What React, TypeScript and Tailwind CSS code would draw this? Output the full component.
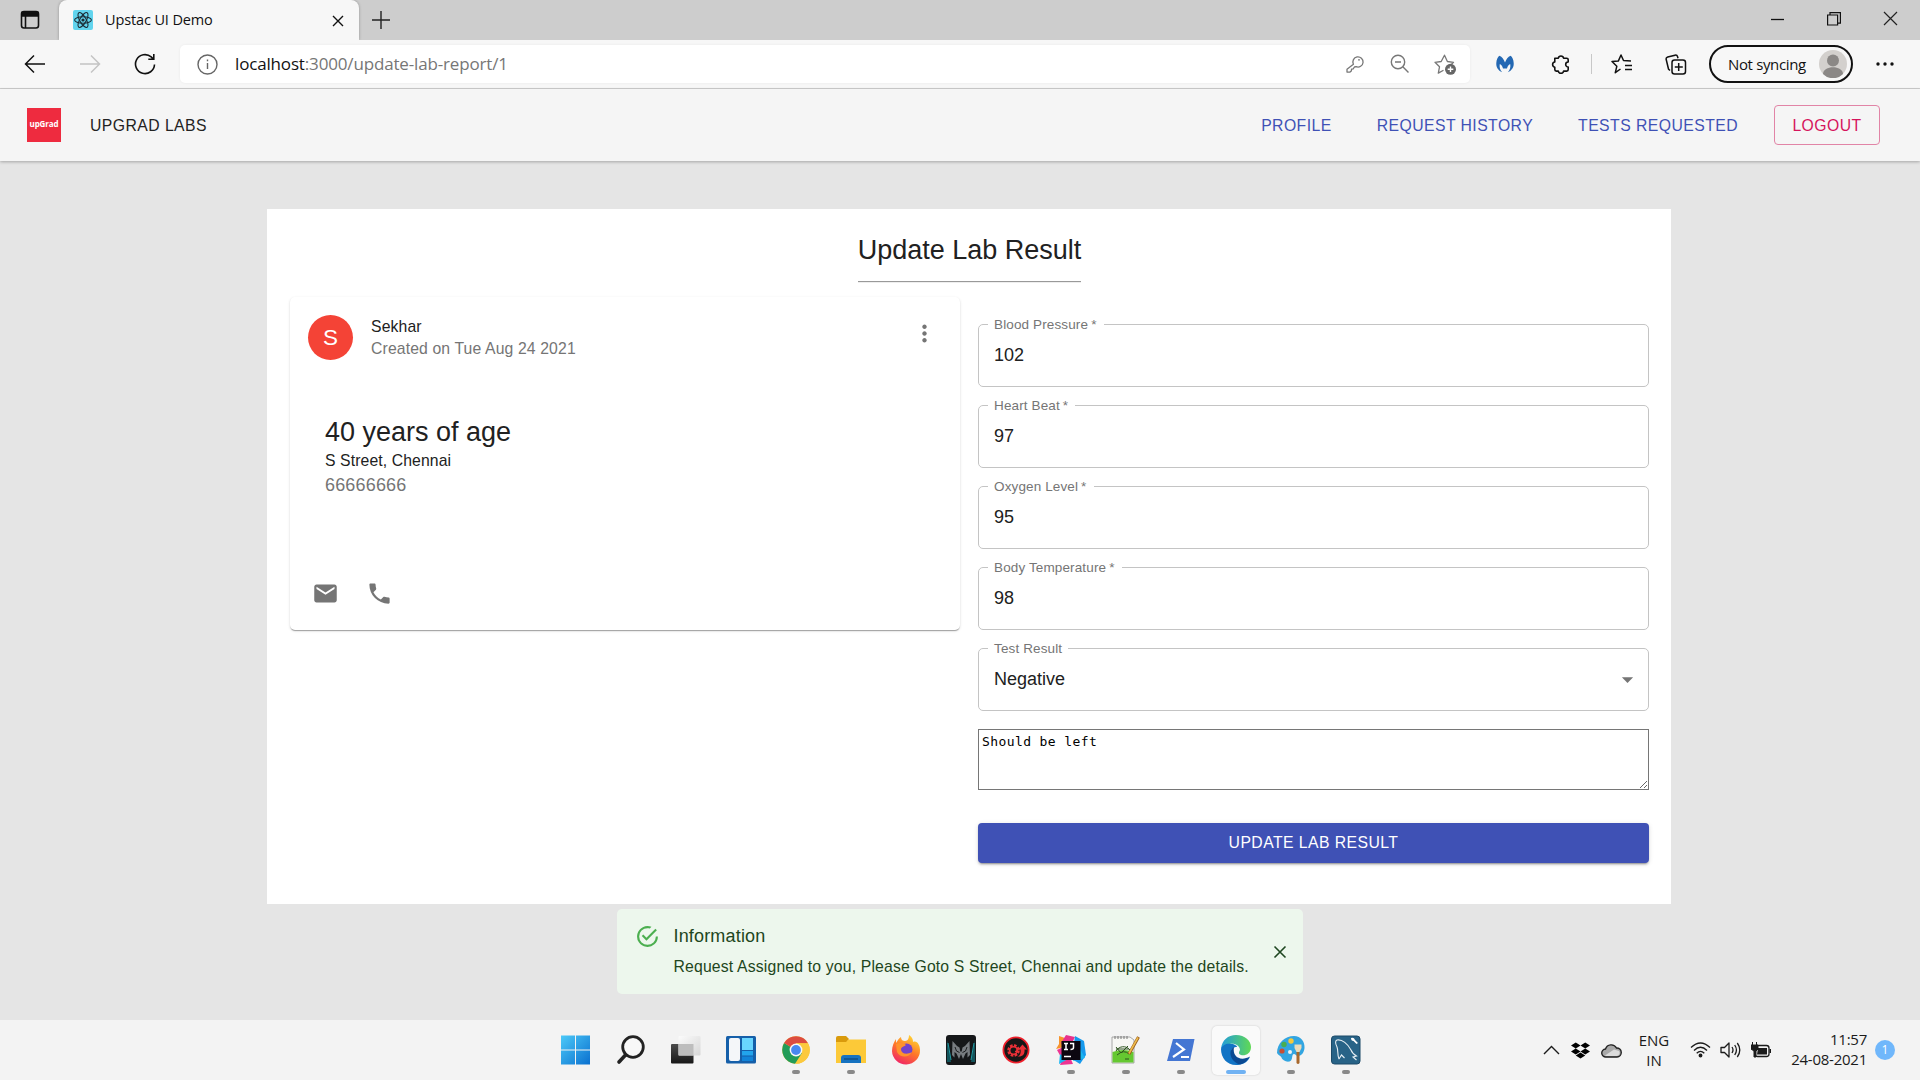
import React from "react";
import { MdEmail, MdPhone, MdMoreVert, MdArrowDropDown } from "react-icons/md";
import { FaDropbox } from "react-icons/fa";

const arial = "font-['Liberation_Sans',Arial,sans-serif]";

function TabBar() {
  return (
    <div className="flex h-10 items-stretch bg-[#cdcdcd] text-[#111]">
      <div className="flex w-[59px] items-center justify-center">
        <svg width="20" height="20" viewBox="0 0 20 20" fill="none" stroke="#111" strokeWidth="1.6">
          <rect x="1.5" y="1.5" width="17" height="16.500" rx="2.5" />
          <path d="M2 2.500h16v3.500H2z" fill="#111" />
          <path d="M5.500 6v12" />
        </svg>
      </div>
      <div className="flex w-[300px] items-center rounded-t-lg bg-[#f7f7f7] pl-[14px] pr-[14px] shadow-[0_0_3px_rgba(0,0,0,0.3)]">
        <svg width="20" height="20" viewBox="0 0 20 20" fill="none" stroke="#1b2b35" strokeWidth="1.1">
          <rect width="20" height="20" rx="2" fill="#61d4ee" stroke="none" />
          <ellipse cx="10" cy="10" rx="8.400" ry="3.200" />
          <ellipse cx="10" cy="10" rx="8.400" ry="3.200" transform="rotate(60 10 10)" />
          <ellipse cx="10" cy="10" rx="8.400" ry="3.200" transform="rotate(120 10 10)" />
          <circle cx="10" cy="10" r="1.600" fill="#1b2b35" stroke="none" />
        </svg>
        <span className="ml-3 flex-1 font-['Open_Sans',sans-serif] text-[14.5px] tracking-[-0.13px]">Upstac UI Demo</span>
        <svg width="14" height="14" viewBox="0 0 14 14" className="mt-px" stroke="#111" strokeWidth="1.4">
          <path d="M2 2l10 10M12 2L2 12" />
        </svg>
      </div>
      <div className="flex flex-1 items-center pl-[13px]">
        <svg width="18" height="18" viewBox="0 0 18 18" stroke="#222" strokeWidth="1.4">
          <path d="M9 0v18M0 9h18" />
        </svg>
      </div>
      <div className="flex items-center gap-[42px] pb-[3px] pr-[22px]">
        <svg width="14" height="14" viewBox="0 0 14 14" stroke="#111" strokeWidth="1.3">
          <path d="M0 7.500h13" />
        </svg>
        <svg width="14" height="14" viewBox="0 0 14 14" fill="none" stroke="#111" strokeWidth="1.2">
          <path d="M.6 3h10v10H.6zM3 3V.7h10.400v10.400h-2.600" />
        </svg>
        <svg width="15" height="15" viewBox="0 0 15 15" stroke="#222" strokeWidth="1.2">
          <path d="M1 1l13 13M14 1L1 14" />
        </svg>
      </div>
    </div>
  );
}

function Toolbar() {
  return (
    <div className="flex h-[49px] items-center border-b border-[#cfcfcf] bg-[#f7f7f7]">
      <svg className="ml-6" width="22" height="20" viewBox="0 0 22 20" fill="none" stroke="#111" strokeWidth="1.5">
        <path d="M21 10H1.500M10 1.500L1.500 10l8.500 8.500" />
      </svg>
      <svg className="ml-[33px]" width="22" height="20" viewBox="0 0 22 20" fill="none" stroke="#c4c4c4" strokeWidth="1.5">
        <path d="M1 10h19.500M12 1.500l8.500 8.500-8.500 8.500" />
      </svg>
      <svg className="ml-[33px]" width="22" height="22" viewBox="0 0 22 22" fill="none" stroke="#111" strokeWidth="1.600">
        <path d="M20.500 11.500a9.500 9.500 0 1 1-3.300-7.600l2 2M19.800 1v5.300h-5.500" />
      </svg>
      <div className="ml-[24px] flex h-[38px] w-[1290px] items-center rounded-[5px] bg-white pl-[17px] shadow-[0_0_3px_rgba(0,0,0,0.06)]">
        <svg width="21" height="21" viewBox="0 0 21 21" fill="none" stroke="#666" strokeWidth="1.400">
          <circle cx="10.500" cy="10.500" r="9.500" />
          <path d="M10.500 9v6M10.500 5.500v1.800" />
        </svg>
        <div className="ml-[17px] flex-1 font-['Open_Sans',sans-serif] text-[17px] tracking-[-0.16px] text-[#767676]">
          <span className="text-[#111]">localhost</span>:3000/update-lab-report/1
        </div>
        <svg width="18" height="18" viewBox="0 0 18 18" fill="none" stroke="#777" strokeWidth="1.300" strokeLinejoin="round">
          <path d="M7.400 9.200a5.100 5.100 0 1 1 2.700 2.500l-1.700.3-1.200 1.800-1.600.4-.3 1.700-1.300 1.200H1v-2.800z" />
          <circle cx="13" cy="4.800" r=".9" fill="#777" stroke="none" />
        </svg>
        <svg className="ml-[26px]" width="20" height="20" viewBox="0 0 20 20" fill="none" stroke="#777" strokeWidth="1.400">
          <circle cx="8" cy="8" r="6.700" />
          <path d="M12.800 12.800L18.500 18.500M5 8h6" />
        </svg>
        <svg className="ml-[24px] mr-[13px]" width="23" height="22" viewBox="0 0 23 22" fill="none">
          <path d="M9.500 17.200l-5.200 2.900 1.200-6.300L1 9.300l6.200-.8L10.500 2.200l2.900 6.300 6.100.8-2 2" stroke="#777" strokeWidth="1.300" strokeLinejoin="round" />
          <circle cx="16.500" cy="16.300" r="5.500" fill="#666" />
          <path d="M16.500 13.500v5.600M13.700 16.300h5.600" stroke="#fff" strokeWidth="1.400" />
        </svg>
      </div>
      <svg className="ml-[26px]" width="18" height="18" viewBox="0 0 18 18" fill="#2468b3">
        <path d="M6.200 17.300C2 15.500 0 12 .3 8 .5 4.500 1.800 1.800 3.500.8 6 1.800 7.800 4.500 9 7.500 10.200 4.500 12 1.800 14.500.8c1.700 1 3 3.700 3.200 7.200.3 4-1.700 7.500-5.900 9.300 2.200-2 3-5.300 2.400-8.300-1.700.8-2.700 2.500-3.200 4.500H7c-.5-2-1.500-3.700-3.200-4.500-.6 3 .2 6.300 2.400 8.300z" />
      </svg>
      <svg className="ml-[37px]" width="20" height="21" viewBox="0 0 20 21" fill="none" stroke="#111" strokeWidth="1.600" strokeLinejoin="round">
        <path d="M3.800 4.200h3.500a2.700 2.700 0 0 1 5.300 0h3.100a1.500 1.500 0 0 1 1.500 1.500v2.300a2.500 2.500 0 1 0 0 5v2.600a1.500 1.500 0 0 1-1.500 1.500h-3.100a2.700 2.700 0 0 1-5.300 0H5.300a1.500 1.500 0 0 1-1.500-1.500V13.200a2.700 2.700 0 0 1 0-5.300z" />
      </svg>
      <div className="ml-[20px] h-5 w-px bg-[#c8c8c8]" />
      <svg className="ml-[19px]" width="22" height="20" viewBox="0 0 22 20" fill="none" stroke="#111" strokeWidth="1.500" strokeLinejoin="round">
        <path d="M9.500 15L4.300 18.700l1.500-6.400L1 7.500l6.300-.4L10 1l2.500 5.500L20 7M14 11.500h7M14 15.500h7" />
      </svg>
      <svg className="ml-[32px]" width="22" height="21" viewBox="0 0 22 21" fill="none" stroke="#111" strokeWidth="1.500">
        <path d="M5 16.500L3.500 15 1.200 5.500c-.3-1.300.3-2.200 1.500-2.500L10 1.200c1.300-.3 2.200.2 2.600 1.500l.4 1.500" />
        <rect x="7" y="6" width="13.500" height="14" rx="2.500" />
        <path d="M13.700 9v8M9.800 13h8" />
      </svg>
      <div className="ml-[22px] flex h-[38px] w-[144px] items-center justify-between rounded-full border-2 border-[#111] pl-[17px] pr-[4px]">
        <span className="whitespace-nowrap font-['Open_Sans',sans-serif] text-[15px] tracking-[-0.35px] text-[#111]">Not syncing</span>
        <svg width="28" height="28" viewBox="0 0 28 28">
          <circle cx="14" cy="14" r="14" fill="#d3d0cd" />
          <circle cx="14" cy="10.500" r="6" fill="#8b8886" />
          <path d="M4 24c0-9 20-9 20 0a14 14 0 0 1-20 0z" fill="#8b8886" />
        </svg>
      </div>
      <svg className="ml-[23px]" width="18" height="4" viewBox="0 0 18 4" fill="#111">
        <circle cx="2" cy="2" r="1.700" /><circle cx="9" cy="2" r="1.700" /><circle cx="16" cy="2" r="1.700" />
      </svg>
    </div>
  );
}

function AppHeader() {
  return (
    <header className="flex h-[72px] items-center bg-[#f5f5f5] pl-[27px] pr-[40px] text-[15.750px] tracking-[0.450px] shadow-[0_1px_3px_rgba(0,0,0,0.28)]">
      <div className="flex h-[34px] w-[34px] items-center justify-center bg-[#ee2b3f] pb-[2px] font-['Open_Sans',sans-serif] text-[8px] font-bold tracking-[-0.1px] text-white">
        upGrad
      </div>
      <span className="ml-[29px] flex-1 pt-[2px] text-[#222]">UPGRAD LABS</span>
      <nav className="flex items-center text-[#3f51b5]">
        <span className="pt-[2px]">PROFILE</span>
        <span className="ml-[45px] pt-[2px]">REQUEST HISTORY</span>
        <span className="ml-[45px] pt-[2px]">TESTS REQUESTED</span>
        <span className="ml-[36px] flex h-10 w-[106px] items-center justify-center rounded-[4px] border border-[#e184a6] pt-px text-[#d5145c]">LOGOUT</span>
      </nav>
    </header>
  );
}

function PatientCard() {
  return (
    <section className="mt-[1px] flex h-[333px] w-[670px] flex-col rounded-[5px] bg-white shadow-[0_2px_1px_-1px_rgba(0,0,0,0.2),0_1px_1px_rgba(0,0,0,0.14),0_1px_3px_rgba(0,0,0,0.12)]">
      <div className="flex h-[81px] items-center pl-[18px] pr-[22px]">
        <div className="flex h-[45px] w-[45px] items-center justify-center rounded-full bg-[#f44336] text-[22.500px] text-white">S</div>
        <div className="ml-[18px] flex-1 text-[15.750px] leading-[22px] tracking-[0.130px]">
          <div className="text-[#212121]">Sekhar</div>
          <div className="text-[#757575]">Created on Tue Aug 24 2021</div>
        </div>
        <MdMoreVert className="-mt-2 text-[27px] text-[#757575]" />
      </div>
      <div className="mt-[36px] flex-1 pl-[35px]">
        <div className="text-[27px] leading-[36px] text-[#212121]">40 years of age</div>
        <div className="text-[15.750px] leading-[22px] tracking-[0.110px] text-[#212121]">S Street, Chennai</div>
        <div className="text-[18px] leading-[27px] tracking-[0.170px] text-[#757575]">66666666</div>
      </div>
      <div className="flex h-[50px] gap-[27px] pl-[22px] text-[27px] text-[#757575]">
        <MdEmail />
        <MdPhone />
      </div>
    </section>
  );
}

function Field({ label, value, required, select }: { label: string; value: string; required?: boolean; select?: boolean }) {
  return (
    <fieldset className="mb-[12px] h-[69px] rounded-[5px] border border-[#c4c4c4] pl-[9px] pr-[7px]">
      <legend className="h-[12px] px-[6px] text-[13.500px] leading-[13px] tracking-[0.130px] text-[#757575]">
        {label}
        {required && <span className="pl-[3px] pr-px">*</span>}
      </legend>
      <div className="flex h-[50px] items-center justify-between pl-[6px] text-[18px] text-[#212121]">
        <span>{value}</span>
        {select && <MdArrowDropDown className="text-[27px] text-[#757575]" />}
      </div>
    </fieldset>
  );
}

function LabForm() {
  return (
    <form className="flex w-[671px] flex-col pt-[22px]">
      <Field label="Blood Pressure" value="102" required />
      <Field label="Heart Beat" value="97" required />
      <Field label="Oxygen Level" value="95" required />
      <Field label="Body Temperature" value="98" required />
      <Field label="Test Result" value="Negative" select />
      <textarea
        className="mt-[6px] block h-[61px] w-full resize rounded-none border border-[#767676] px-[3px] py-[3px] font-['DejaVu_Sans_Mono',monospace] text-[13px] leading-[18px] tracking-[0.400px] text-black"
        defaultValue="Should be left"
      />
      <button type="button" className="mt-[33px] flex h-[40px] items-center justify-center rounded-[4px] bg-[#3f51b5] text-[15.750px] tracking-[0.450px] text-white shadow-[0_3px_1px_-2px_rgba(0,0,0,0.2),0_2px_2px_rgba(0,0,0,0.14),0_1px_5px_rgba(0,0,0,0.12)]">
        UPDATE LAB RESULT
      </button>
    </form>
  );
}

function Alert() {
  return (
    <div className="mx-auto mt-[5px] flex h-[85px] w-[686px] rounded-[5px] bg-[#edf7ed] pl-[18px] pr-[16px] text-[#1e4620]">
      <svg className="mt-[15px]" width="25" height="25" viewBox="0 0 24 24" fill="#4caf50">
        <path d="M20 12A8 8 0 1 1 12 4c.76 0 1.500.110 2.200.310L15.770 2.740A10 10 0 1 0 22 12h-2zM7.910 10.080L6.500 11.500 11 16 21 6 19.590 4.580 11 13.170 7.910 10.080z" />
      </svg>
      <div className="ml-[13px] flex-1 whitespace-nowrap pl-[0.500px] pt-[14px]">
        <div className="text-[18px] leading-[27px] tracking-[0.170px]">Information</div>
        <div className="mt-[6px] text-[15.750px] leading-[22px] tracking-[0.170px]">Request Assigned to you, Please Goto S Street, Chennai and update the details.</div>
      </div>
      <svg className="mt-[36px]" width="14" height="14" viewBox="0 0 14 14" stroke="#1e4620" strokeWidth="1.600">
        <path d="M1.500 1.500l11 11M12.500 1.500l-11 11" />
      </svg>
    </div>
  );
}

function TaskItem({ children, running, active }: { children: React.ReactNode; running?: boolean; active?: boolean }) {
  return (
    <div className="flex w-[55px] justify-center">
      <div className={"flex h-[49px] w-[48px] flex-col items-center rounded-[5px] pt-[9px] " + (active ? "bg-[#fafafa] shadow-[0_0_2px_rgba(0,0,0,0.18)]" : "")}>
        <svg width="30" height="30" viewBox="0 0 30 30">{children}</svg>
        {running && <div className={active ? "mt-[5px] h-[4px] w-[20px] rounded-full bg-[#70b2f3]" : "mt-[5px] h-[4px] w-[8px] rounded-full bg-[#898989]"} />}
      </div>
    </div>
  );
}

function Taskbar() {
  return (
    <footer className="flex h-[60px] bg-[#f3f3f3]">
      <div className="ml-[548px] flex pt-[6px]">
        <TaskItem>
          <defs><linearGradient id="win" x2="1" y2="1"><stop stopColor="#4cc9f8" /><stop offset="1" stopColor="#0a70cf" /></linearGradient></defs>
          <path d="M0 .5h14v14H0zM15 .5h14v14H15zM0 15.500h14v14H0zM15 15.500h14v14H15z" fill="url(#win)" />
        </TaskItem>
        <TaskItem>
          <circle cx="17" cy="12" r="10.300" fill="#f8f8f8" stroke="#222" strokeWidth="2.800" />
          <path d="M9.500 20L3 27" stroke="#222" strokeWidth="3.600" strokeLinecap="round" />
        </TaskItem>
        <TaskItem>
          <defs>
            <linearGradient id="tv" x2="0" y2="1"><stop stopColor="#4b4b4b" /><stop offset="1" stopColor="#171717" /></linearGradient>
            <linearGradient id="tw" x2="1" y2="1"><stop stopColor="#fbfbfb" /><stop offset="1" stopColor="#d6d6d6" /></linearGradient>
          </defs>
          <rect x="0" y="9" width="22.500" height="19.500" rx="1" fill="url(#tv)" />
          <rect x="7.500" y="1" width="22" height="19.500" rx="1" fill="url(#tw)" />
          <path d="M7.500 9h15v11.500h-15z" fill="#bdbdbd" />
        </TaskItem>
        <TaskItem>
          <rect x="0" y="1" width="30" height="27.500" rx="1.500" fill="#155fa9" />
          <rect x="3" y="3" width="11" height="23" rx="2" fill="#f4f6f9" />
          <path d="M16 3h11v12H16z" fill="#69d6ff" /><path d="M16 16h11v4.500H16z" fill="#22a4ec" /><path d="M16 21.500h11V26H16z" fill="#1183d8" />
        </TaskItem>
        <TaskItem running>
          <circle cx="15" cy="15" r="13.800" fill="#fbc93b" />
          <path d="M15 15L3.050 8.100A13.800 13.800 0 0 0 14 28.750L21 18z" fill="#229c58" />
          <path d="M15 15L3.050 8.100A13.800 13.800 0 0 1 27 8.200H15z" fill="#dc4c3f" />
          <path d="M21 18.500l-6 10.300A13.800 13.800 0 0 0 27 8.200H15z" fill="#fcc93d" />
          <circle cx="15" cy="15" r="6.400" fill="#f8f8f8" /><circle cx="15" cy="15" r="4.900" fill="#4788f0" />
        </TaskItem>
        <TaskItem running>
          <path d="M0 3q0-2 2-2h8l3 3-3 4H0z" fill="#d99a0c" />
          <path d="M0 7h10l2.500-2.500H30V28H0z" fill="#fcc938" />
          <path d="M5 28v-5q0-3 3-3h14q3 0 3 3v5z" fill="#1672c0" /><path d="M8 24h14" stroke="#0c4579" strokeWidth="1.200" />
        </TaskItem>
        <TaskItem>
          <defs>
            <linearGradient id="ff" x1=".8" y1="0" x2=".3" y2="1"><stop stopColor="#ffdf35" /><stop offset=".5" stopColor="#ff7a28" /><stop offset="1" stopColor="#f02467" /></linearGradient>
          </defs>
          <path d="M18 0c4 3 4 5 4 7 4-2 7 3 7 8a14 14 0 0 1-28 1C1 11 3 7 5 4v4c2-3 3-5 5-6 0 3 2 4 4 4 3 0 4-3 4-6z" fill="url(#ff)" />
          <circle cx="15.500" cy="14.500" r="6" fill="#7343cb" />
          <path d="M5 9c5-2 8-1 10 1-2 2-4 1-5 4 0 5 6 6 11 3-3 6-12 6-15 0z" fill="#ff922c" />
        </TaskItem>
        <TaskItem>
          <rect width="30" height="30" rx="3" fill="#151719" />
          <path d="M1 5l4 22H1zM29 5l-4 22h4z" fill="#13545b" /><path d="M2 8l3 17M28 8l-3 17" stroke="#24bcc6" strokeWidth=".8" />
          <path d="M6.500 6l4.500 5 2.500 1.500.8 4h1.400l.8-4L19 11l4.500-5 .5 14-2.500 2.500V17l-2 1.500L17 24l-2-5-2 5-2.500-5.500-2-1.500v5.500L6 20z" fill="#777c80" />
          <path d="M9 12l1.500 4 3 1.500M21 12l-1.500 4-3 1.500" stroke="#1c1e20" fill="none" />
        </TaskItem>
        <TaskItem>
          <circle cx="15" cy="15" r="12.600" fill="#171717" stroke="#ef1f2b" strokeWidth="1.800" />
          <circle cx="12.500" cy="15.500" r="5" fill="none" stroke="#ea3037" strokeWidth="2.600" strokeDasharray="2.600 1.300" />
          <circle cx="12.500" cy="15.500" r="3.800" fill="none" stroke="#ea3037" strokeWidth="1.600" />
          <path d="M14 16.500c2 .5 2.500-1 1.500-2" fill="none" stroke="#ea3037" strokeWidth="1.500" />
          <path d="M16.500 21.500c3-1 3.500-4 3-7h-2.500l4.500-5 4.500 5h-2.500c.5 5-2 7.500-7 7z" fill="#ea3037" />
        </TaskItem>
        <TaskItem running>
          <path d="M3 1l9 3-4 8-8 2 3-5z" fill="#f7932c" /><path d="M10 0l9 2-6 12-8-6z" fill="#e8318c" /><path d="M19 1l9 5 2 14-6 9-8-5z" fill="#1699ed" /><path d="M1 15l8-4 8 18-13 1 2-6z" fill="#ed3592" /><path d="M4 19l8 5-9 5zM22 10l7 13-12 3z" fill="#19b6f2" />
          <path d="M5.500 6h19v19h-19z" fill="#0c0710" />
          <path d="M8 8.500h4M10 8.500v6M8 14.500h4M14 8.500h3.500v4q0 2-3 2" fill="none" stroke="#fff" strokeWidth="1.500" />
          <path d="M8 21.500h7" stroke="#fff" strokeWidth="1.500" />
        </TaskItem>
        <TaskItem running>
          <path d="M1 2h18l4 3v23H1z" fill="#f7f7f4" stroke="#969696" strokeWidth=".8" />
          <path d="M1.500 17q11-4 21 0v10.500h-21z" fill="#65c831" />
          <path d="M4 1v3M7 1v3M10 1v3M13 1v3M16 1v3" stroke="#777" />
          <path d="M5 16c3-5 10-6 14-1M5 12l5 6 7-7M5 14h13M6 20q7-6 12-1M14 24h4" fill="none" stroke="#2f5520" />
          <path d="M27.500 2L18 19" stroke="#9a5c19" strokeWidth="3" /><path d="M27 2.500L18 18.500" stroke="#eebc4c" strokeWidth="1.600" />
        </TaskItem>
        <TaskItem running>
          <path d="M7 4h21.500L24 26H1z" fill="#4476d3" />
          <path d="M10 8l8 6.500L7 22M15 22h8" fill="none" stroke="#fff" strokeWidth="2.200" />
        </TaskItem>
        <TaskItem running active>
          <defs>
            <linearGradient id="edge" x1="0" x2="1"><stop stopColor="#219cdc" /><stop offset="1" stopColor="#60d954" /></linearGradient>
          </defs>
          <path d="M0 14C1 5 7 0 15 0c9 0 15 6 15 12 0 7-6 9-10 8-3-1-2-3-1-5 0-4-5-7-10-6C4 10 1 12 0 14z" fill="url(#edge)" />
          <path d="M0 14c1-4 6-6 10-5 4 0 6 2 6 3-8 0-7 9-2 12 5 3 10 2 15-2-3 6-8 8-14 8C6 30 0 23 0 14z" fill="#1274c5" />
          <path d="M13 12c-7 4-3 15 6 17.500 4-1 8-4 10-8-9 5-18 1-16-9.500z" fill="#0b4a93" />
        </TaskItem>
        <TaskItem running>
          <path d="M1 18C1 8 9 1 18 1c7 0 11 6 10.500 12-.4 5-3.500 8-6.500 8-2 0-2.500-2-4-2-2.500 0-1 4-3 6.500-3 3-9-.5-9.500-3C5 21 3 21 1 18z" fill="#32a5e1" />
          <circle cx="14" cy="17" r="2" fill="#f3f3f3" />
          <circle cx="15" cy="6" r="2.700" fill="#f6c93b" /><circle cx="8" cy="9.500" r="2.700" fill="#48ad51" /><circle cx="6" cy="16" r="2.600" fill="#c84e34" />
          <path d="M20.500 17h3v11q-1.500 2-3 0z" fill="#a8682c" /><path d="M18.500 9.500h7V13l-2 4h-3l-2-4z" fill="#eadaba" />
        </TaskItem>
        <TaskItem running>
          <rect x=".5" y="1" width="28.500" height="28" rx="3" fill="#286387" stroke="#1c4a69" />
          <path d="M8 24c-2-5-.5-8-2-12-1.500-3-2-6 0-7 5-1 11 4 14 10 1 3 3 4.500 5.500 6l-3.500 1 3.500 3M8 24l2.500-4 3 3" fill="none" stroke="#e4edf3" strokeWidth="1.100" />
          <path d="M20 3q3-1 4 2l3 3-1.500 1-3-3q-2.500 0-2.500-3z" fill="#fff" />
        </TaskItem>
      </div>
      <div className="ml-auto flex items-center pr-[25px] font-['Open_Sans',sans-serif] text-[15px] text-[#1b1b1b]">
        <svg width="17" height="10" viewBox="0 0 17 10" fill="none" stroke="#1b1b1b" strokeWidth="1.400"><path d="M1 9l7.500-7.500L16 9" /></svg>
        <FaDropbox className="ml-[11px] text-[19px] text-black" />
        <svg className="ml-[11px]" width="21" height="15" viewBox="0 0 21 15">
          <path d="M5 14a4 4 0 0 1-.5-8A6 6 0 0 1 15.500 5 4.500 4.500 0 0 1 16 14z" fill="#a9a9a9" stroke="#222" strokeWidth="1.400" />
          <path d="M4 12.500l9-6 5 1.500q2 3-2 5H5z" fill="#dcdcdc" />
        </svg>
        <div className="ml-[16px] w-[32px] text-center leading-5">ENG<br />IN</div>
        <svg className="ml-[20px]" width="21" height="16" viewBox="0 0 21 16" fill="none" stroke="#1b1b1b" strokeWidth="1.300">
          <path d="M1 5.500q9.500-9 19 0M4 8.500q6.500-6.500 13 0M6.700 11.300q3.800-3.800 7.600 0" /><circle cx="10.500" cy="13.500" r="1.300" fill="#1b1b1b" />
        </svg>
        <svg className="ml-[9px]" width="21" height="18" viewBox="0 0 21 18" fill="none" stroke="#1b1b1b" strokeWidth="1.300" strokeLinejoin="round">
          <path d="M1 6.500h3.500L9 2v14l-4.500-4.500H1zM12 6q2 3 0 6M14.700 4q3.500 5 0 10M17.300 2q5 7 0 14" />
        </svg>
        <svg className="ml-[10px]" width="21" height="16" viewBox="0 0 21 16">
          <rect x="4" y="3.500" width="14" height="11" rx="2.500" fill="none" stroke="#1b1b1b" strokeWidth="1.300" /><path d="M7 6h9v6.500H6zM18.500 7H20v4h-1.500z" fill="#1b1b1b" />
          <path d="M0 3h7v4L5 9v6H3V9L0 7zM1.500 0v3M5.500 0v3" fill="#1b1b1b" stroke="#1b1b1b" />
        </svg>
        <div className="ml-[19px] flex w-[76px] flex-col items-end whitespace-nowrap pb-[2px] leading-5 tracking-[-0.250px]"><span>11:57</span><span>24-08-2021</span></div>
        <div className="ml-[8px] flex h-5 w-5 items-center justify-center rounded-full bg-[#70b7fb] text-[12px] text-white">1</div>
      </div>
    </footer>
  );
}

export default function App() {
  return (
    <div className={"flex h-[1080px] w-[1920px] flex-col overflow-hidden bg-[#e5e5e5] " + arial}>
      <TabBar />
      <Toolbar />
      <AppHeader />
      <main className="flex-1">
        <div className="ml-[267px] mt-[48px] h-[695px] w-[1404px] bg-white pl-[23px] pr-[22px]">
          <div className="flex h-[87px] justify-center">
            <h1 className="h-[74px] border-b border-[#eee] pt-[23px] text-[27px] leading-[36px] text-[#212121] shadow-[inset_0_-1px_0_#999]">Update Lab Result</h1>
          </div>
          <div className="flex justify-between">
            <PatientCard />
            <LabForm />
          </div>
        </div>
        <Alert />
      </main>
      <Taskbar />
    </div>
  );
}
